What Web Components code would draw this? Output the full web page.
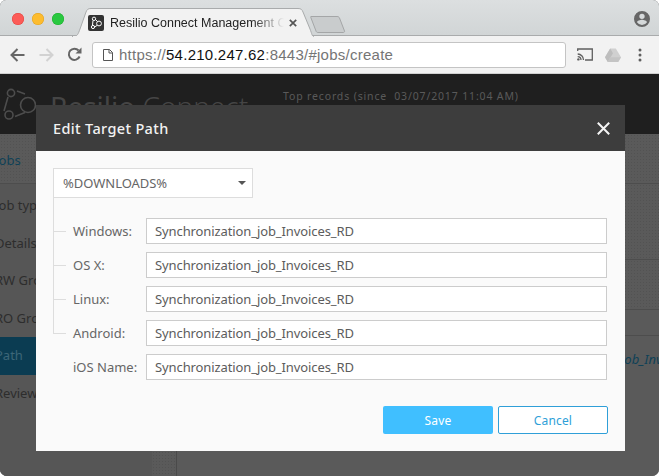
<!DOCTYPE html>
<html><head><meta charset="utf-8"><style>
html,body{margin:0;padding:0;background:#fff;width:659px;height:476px;overflow:hidden}
</style></head><body>
<browser-window>
<browser-chrome></browser-chrome>
<app-page></app-page>
<edit-dialog slot="overlay"></edit-dialog>
</browser-window>
<template id="row-t"><style>
:host{display:flex;align-items:center;height:26px;position:relative}
.tick{width:13px;height:1px;background:#ddd;margin-right:7px;flex:none}
:host([last]) .tick{background:transparent}
label{width:72px;flex:none;font-size:13px;color:#666;margin-right:1px}
.in{flex:none;width:451px;height:24px;border:1px solid #ccc;background:#fff;font-size:13px;color:#5c5c5c;padding-left:8px;line-height:24px;letter-spacing:-.1px;white-space:nowrap}
</style><span class="tick"></span><label><slot name="l"></slot></label><div class="in"><slot></slot></div></template>
<script>
function def(name,html){customElements.define(name,class extends HTMLElement{constructor(){super();this.attachShadow({mode:'open'}).innerHTML=html;}})}
def('browser-window',`<style>
:host{display:flex;flex-direction:column;width:659px;height:476px;position:relative;overflow:hidden;border-radius:6px 6px 7px 7px;font-family:"Noto Sans",sans-serif;background:#5a5a5a}
</style><slot></slot><slot name="overlay"></slot>`);
def('browser-chrome',`<style>
:host{display:block;flex:none;height:74px;font-family:"Liberation Sans",sans-serif;position:relative}
.top{height:36px;background:linear-gradient(#dcdfe0,#d1d5d6);display:flex;position:relative;border-bottom:1px solid #a9abac;box-sizing:border-box}
.lights{display:flex;gap:8px;padding:13px 0 0 12px}
.lights i{width:12px;height:12px;border-radius:50%;display:block}
.tab{position:absolute;left:72px;top:8px;width:242px;height:28px}
.tab svg.shape{position:absolute;left:0;top:0}
.fav{position:absolute;left:16px;top:7px;width:16px;height:16px}
.title{position:absolute;left:38px;top:6px;width:174px;font-size:12.5px;line-height:18px;color:#222;white-space:nowrap;overflow:hidden;-webkit-mask-image:linear-gradient(90deg,#000 82%,transparent);mask-image:linear-gradient(90deg,#000 82%,transparent)}
.x{position:absolute;left:217px;top:11px}
.newtab{position:absolute;left:310px;top:16px}
.acct{position:absolute;left:634px;top:11px}
.bar{height:37px;background:#f2f2f2;display:flex;align-items:center;border-bottom:1px solid #d0d0d0}
.nav{display:flex;width:92px;flex:none;align-items:center}
.nav svg{display:block}
.omni{width:474px;height:26px;box-sizing:border-box;border:1px solid #c4c4c4;border-radius:3px;background:#fff;display:flex;align-items:center;font-size:15px;color:#757575;white-space:nowrap;letter-spacing:.25px}
.omni b{font-weight:400;color:#111}
.omni svg{margin:0 6px 0 10px}
.tools{display:flex;align-items:center;padding-left:11px}
</style>
<div class="top">
 <div class="lights"><i style="background:#fc5b57;box-shadow:inset 0 0 0 .5px #e0443e"></i><i style="background:#fdbc2e;box-shadow:inset 0 0 0 .5px #dea123"></i><i style="background:#29c840;box-shadow:inset 0 0 0 .5px #1dad2b"></i></div>
 <div class="tab">
  <svg class="shape" width="242" height="29"><path d="M0 28.5 C6 28.5 6 26 8 21 L14 4 C15 1.5 16 .5 19 .5 H226 C229 .5 230 1.5 231 4 L238 21 C240 26 240 28.5 242 28.5" fill="#f2f2f2" stroke="#a9abac"/><rect x="1" y="28" width="240" height="2" fill="#f2f2f2"/></svg>
  <svg class="fav" viewBox="0 0 16 16"><rect width="16" height="16" rx="2" fill="#333"/><circle cx="6" cy="3.8" r="1.7" fill="none" stroke="#fff"/><circle cx="11" cy="8.5" r="2.4" fill="none" stroke="#fff"/><circle cx="5" cy="12" r="1.6" fill="none" stroke="#fff"/><path d="M7.5 4.5 L9.5 6.5 M6.5 12 L9 10.5 M5 5.5 L4.5 10" stroke="#fff"/></svg>
  <div class="title">Resilio Connect Management Console</div>
  <svg class="x" width="8" height="8"><path d="M.8 .8 L7.2 7.2 M7.2 .8 L.8 7.2" stroke="#555" stroke-width="1.7"/></svg>
 </div>
 <svg class="newtab" width="36" height="17"><path d="M1 .5 H27 C28.5 .5 29 1 29.5 2 L34.5 15 C34.8 16 34 16.5 33 16.5 H8 C7 16.5 6.3 16 6 15 L1 2 C.7 1 .5 .5 1 .5 Z" fill="#c9cccd" stroke="#a4a6a7"/></svg>
 <svg class="acct" width="16" height="16" viewBox="0 0 24 24"><path fill="#676767" d="M12 0a12 12 0 1 0 0 24 12 12 0 0 0 0-24zm0 4a4 4 0 1 1 0 8 4 4 0 0 1 0-8zm0 17a9 9 0 0 1-7.5-4c0-2.5 5-3.9 7.5-3.9s7.5 1.4 7.5 3.9A9 9 0 0 1 12 21z"/></svg>
</div>
<div class="bar">
 <div class="nav">
  <svg width="15" height="14" style="margin-left:10px" viewBox="0 0 15 14"><path d="M14.5 7H2M7.5 1L1.5 7l6 6" fill="none" stroke="#666" stroke-width="2"/></svg>
  <svg width="15" height="14" style="margin-left:14px" viewBox="0 0 15 14"><path d="M.5 7H13M7.5 1l6 6-6 6" fill="none" stroke="#d2d2d2" stroke-width="2"/></svg>
  <svg width="15" height="15" style="margin-left:13px" viewBox="0 0 15 15"><path d="M12.6 9.5A5.6 5.6 0 1 1 11.6 3.5" fill="none" stroke="#666" stroke-width="2"/><path d="M14.5 .5V6.5H8.5Z" fill="#666"/></svg>
 </div>
 <div class="omni"><svg width="10" height="12" viewBox="0 0 10 12"><path d="M.5.5H6.5L9.5 3.5V11.5H.5ZM6 .5V4H9.5" fill="#fff" stroke="#555"/></svg><span>https://<b>54.210.247.62</b>:8443/#jobs/create</span></div>
 <div class="tools">
  <svg width="16" height="13" viewBox="0 0 16 13"><path d="M.7 3V1H15.3V12H8M.7 6a6 6 0 0 1 5.8 6M.7 8.6A3.5 3.5 0 0 1 4 12" fill="none" stroke="#5f5f5f" stroke-width="1.3"/><circle cx="1.4" cy="11.4" r="1.2" fill="#5f5f5f"/></svg>
  <svg width="16" height="14" style="margin-left:12px" viewBox="0 0 16 14"><path d="M5.2 .5h5.6L16 9.2 13.2 14H2.8L0 9.2Z" fill="#d0d0d0"/><path d="M5.2 .5 8 5.3 2.8 14 0 9.2Z" fill="#bdbdbd"/><path d="M5 9.2H16L13.2 14H2.8Z" fill="#c4c4c4"/></svg>
  <svg width="4" height="14" style="margin-left:17px" viewBox="0 0 4 14"><circle cx="2" cy="2" r="1.5" fill="#5f5f5f"/><circle cx="2" cy="7" r="1.5" fill="#5f5f5f"/><circle cx="2" cy="12" r="1.5" fill="#5f5f5f"/></svg>
 </div>
</div>`);
def('app-page',`<style>
:host{display:flex;flex-direction:column;flex:1;background:#5a5a5a;color:#2f2f2f;overflow:hidden;--dots:radial-gradient(#525252 .6px,transparent .8px)}
.hd{height:60px;flex:none;background:#1f1f1f;display:flex;position:relative;overflow:hidden}
.logo{margin:13px 0 0 0;flex:none}
.brand{font-size:28px;line-height:36px;color:#454545;margin:14px 0 0 14px;width:233px;white-space:nowrap;font-weight:400;flex:none}
.brand span{font-weight:300}
.rec{font-size:10.5px;color:#5a5a5a;margin-top:15px;letter-spacing:.85px;white-space:pre;line-height:14px}
.crumb{height:50px;flex:none;border-bottom:1px solid #4d4d4d;box-sizing:border-box;font-size:13px;color:#0f4157;background-image:var(--dots);background-size:3px 3px}
.crumb span{display:block;margin:17px 0 0 -5px}
.main{flex:1;display:flex;min-height:0}
ul{list-style:none;margin:0;padding:3px 0 0;width:152px;flex:none;font-size:13px;background:#565656}
li{height:37.5px;line-height:37px;white-space:nowrap;overflow:hidden;color:#2d2d2d;padding-left:0}
li span{margin-left:-5px;display:inline-block}
li.on{background:#0b3c52;color:#3d6678;height:38px;margin-top:0}
.gut{width:24px;flex:none;border-right:1px solid #4a4a4a;background-image:var(--dots);background-size:3px 3px}
.content{flex:1;display:flex;flex-direction:column;min-width:0;overflow:hidden}
.r{flex:none;box-sizing:border-box;border-bottom:1px solid #4d4d4d}
.d{background-image:var(--dots);background-size:3px 3px}
.job{padding:14px 0 0 444px;font-size:13px;font-style:italic;color:#0f4157;white-space:nowrap;line-height:18px}
</style>
<div class="hd">
 <svg class="logo" width="36" height="34" viewBox="0 0 36 34"><g fill="none" stroke="#4d4d4d" stroke-width="1.6"><circle cx="11" cy="6" r="3.6"/><circle cx="28" cy="18" r="7.5"/><circle cx="9" cy="28" r="4"/><path d="M8 10 4 24M17 4l8 3M15 29.5l10-4"/></g></svg>
 <div class="brand">Resilio <span>Connect</span></div>
 <div class="rec">Top records (since  03/07/2017 11:04 AM)</div>
</div>
<div class="crumb"><span>Jobs</span></div>
<div class="main">
 <ul><li><span>Job type</span></li><li><span>Details</span></li><li><span>RW Groups</span></li><li><span>RO Groups</span></li><li class="on"><span>Path</span></li><li><span>Review</span></li></ul>
 <div class="gut"></div>
 <div class="content">
  <div class="r d" style="height:76px"></div>
  <div class="r d" style="height:50px"></div>
  <div class="r" style="height:26px"></div>
  <div class="job">job_Invoices_RD</div>
 </div>
</div>`);
customElements.define('path-row',class extends HTMLElement{constructor(){super();this.attachShadow({mode:'open'}).appendChild(document.getElementById('row-t').content.cloneNode(true));}});
def('edit-dialog',`<style>
:host{display:block;position:absolute;left:36px;top:105px;width:589px;height:346px;background:#fafafa;font-family:"Noto Sans",sans-serif}
header{height:46px;background:#3d3d3d;display:flex;align-items:center;justify-content:space-between;padding:0 15px 0 17px;box-sizing:border-box}
h2{margin:0;font-size:14.5px;font-weight:500;color:#f2f2f2;letter-spacing:.35px}
.body{padding:17px 18px 0 17px}
.sel{width:200px;height:30px;box-sizing:border-box;background:#fff;border:1px solid #ddd;display:flex;align-items:center;justify-content:space-between;padding:0 6px 0 9px;font-size:13px;color:#666;letter-spacing:-.03px}
.sel i{width:0;height:0;border:4px solid transparent;border-top:4px solid #555;border-bottom:0}
.tree{position:relative;margin-top:20px;display:flex;flex-direction:column;gap:8px}
.tree::before{content:"";position:absolute;left:0;top:-20px;height:136px;width:1px;background:#ddd}
.btns{display:flex;gap:5px;margin:26px 0 0 330px}
button{width:110px;height:28px;flex:none;box-sizing:border-box;border-radius:2px;font:12px "Noto Sans",sans-serif;letter-spacing:.15px;padding:0}
.s{background:#40bfff;border:0;color:#fff}
.c{background:#fff;border:1px solid #2f9fd8;color:#2f9fd8}
</style>
<header><h2>Edit Target Path</h2><svg width="13" height="13" viewBox="0 0 13 13"><path d="M.8.8l11.4 11.4M12.2.8.8 12.2" stroke="#f5f5f5" stroke-width="2"/></svg></header>
<div class="body">
 <div class="sel"><span>%DOWNLOADS%</span><i></i></div>
 <div class="tree">
  <path-row><span slot="l">Windows:</span>Synchronization_job_Invoices_RD</path-row>
  <path-row><span slot="l">OS X:</span>Synchronization_job_Invoices_RD</path-row>
  <path-row><span slot="l">Linux:</span>Synchronization_job_Invoices_RD</path-row>
  <path-row><span slot="l">Android:</span>Synchronization_job_Invoices_RD</path-row>
  <path-row last><span slot="l">iOS Name:</span>Synchronization_job_Invoices_RD</path-row>
 </div>
 <div class="btns"><button class="s">Save</button><button class="c">Cancel</button></div>
</div>`);
</script>
</body></html>
